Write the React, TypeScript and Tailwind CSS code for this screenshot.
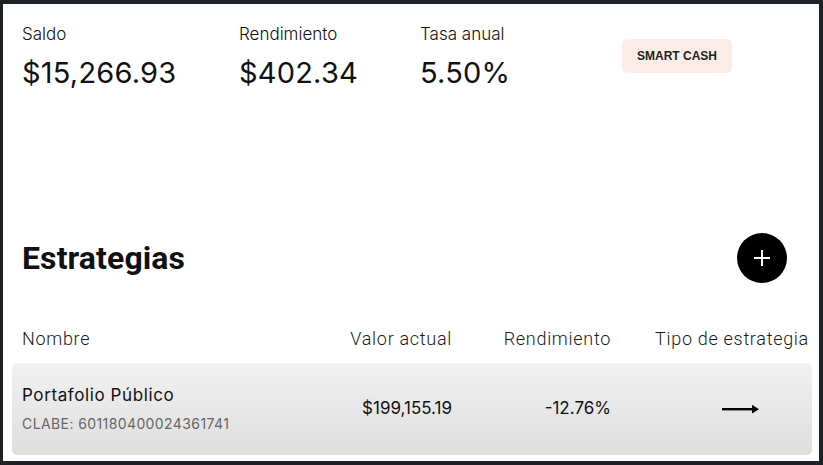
import React from "react";

function Arrow() {
  return (
    <svg width="37" height="10" viewBox="0 0 37 10">
      <rect x="0" y="4" width="31" height="2.4" fill="#000" />
      <path d="M30 0.8 L37 5.2 L30 9.6 Z" fill="#000" />
    </svg>
  );
}

export default function App() {
  return (
    <div className="w-[823px] h-[465px] bg-[#1e2227] pt-[4px] pl-[3px] pr-[4px] pb-[4px]">
      <div className="w-full h-full bg-white flex flex-col overflow-hidden">
        <div className="flex items-start pl-[19px] pt-[18px] font-['Inter',sans-serif] text-[#111]">
          <div className="w-[217px] shrink-0">
            <div className="text-[17px] leading-[24px] font-light">Saldo</div>
            <div className="text-[29px] leading-[36px] mt-[9px] tracking-[0.2px]">$15,266.93</div>
          </div>
          <div className="w-[181px] shrink-0">
            <div className="text-[17px] leading-[24px] font-light">Rendimiento</div>
            <div className="text-[29px] leading-[36px] mt-[9px] tracking-[0.2px]">$402.34</div>
          </div>
          <div className="w-[202px] shrink-0">
            <div className="text-[17px] leading-[24px] font-light">Tasa anual</div>
            <div className="text-[29px] leading-[36px] mt-[9px] tracking-[0.2px]">5.50%</div>
          </div>
          <div className="mt-[17px] w-[110px] h-[34px] rounded-[5px] bg-[#fbede5] flex items-center justify-center font-['Liberation_Sans',sans-serif] font-bold text-[12px] text-[#222]">
            SMART CASH
          </div>
        </div>

        <div className="flex items-center justify-between pl-[19px] pr-[32px] mt-[142px]">
          <div className="font-['Roboto',sans-serif] font-bold text-[32px] leading-[36px] text-[#111] tracking-[0.1px]">Estrategias</div>
          <div className="w-[50px] h-[50px] rounded-full bg-black flex items-center justify-center">
            <svg width="18" height="18" viewBox="0 0 18 18">
              <rect x="8" y="1" width="2" height="16" fill="#fff" />
              <rect x="1" y="8" width="16" height="2" fill="#fff" />
            </svg>
          </div>
        </div>

        <div className="ml-[9px] mr-[7px] mt-[45px]">
          <div className="grid grid-cols-[290px_140px_159px_1fr] px-[10px] font-['Roboto',sans-serif] font-light text-[18px] leading-[22px] tracking-[0.7px] text-[#1a1a1a]">
            <div>Nombre</div>
            <div className="text-right">Valor actual</div>
            <div className="text-right">Rendimiento</div>
            <div className="pl-[44px] whitespace-nowrap">Tipo de estrategia</div>
          </div>
          <div className="mt-[13px] h-[92px] rounded-[5px] bg-gradient-to-b from-[#f1f1f1] to-[#dedede] grid grid-cols-[290px_140px_159px_1fr] items-center px-[10px] font-['Inter',sans-serif]">
            <div>
              <div className="text-[17px] leading-[22px] text-[#111] tracking-[0.6px]">Portafolio Público</div>
              <div className="text-[14px] leading-[20px] text-[#666] mt-[8px] tracking-[0.4px]">CLABE: 601180400024361741</div>
            </div>
            <div className="text-right text-[17px] text-[#111]">$199,155.19</div>
            <div className="text-right text-[17px] text-[#111]">-12.76%</div>
            <div className="pl-[111px] flex items-center">
              <Arrow />
            </div>
          </div>
        </div>
      </div>
    </div>
  );
}
